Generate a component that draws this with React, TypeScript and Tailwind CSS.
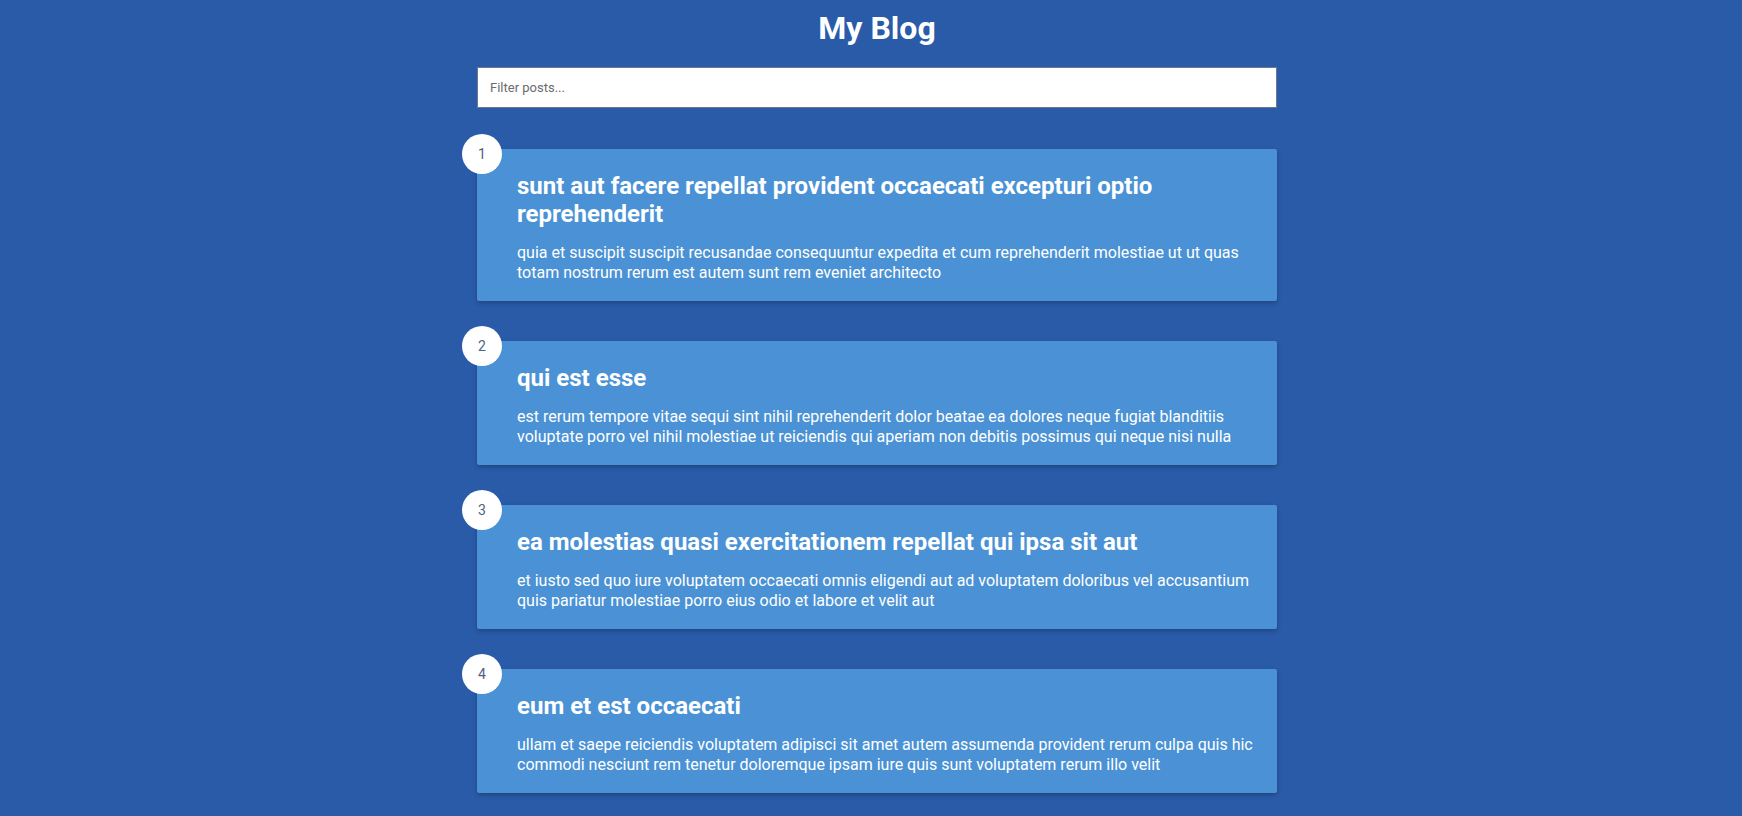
const posts = [
  {
    id: 1,
    title:
      "sunt aut facere repellat provident occaecati excepturi optio reprehenderit",
    body: "quia et suscipit suscipit recusandae consequuntur expedita et cum reprehenderit molestiae ut ut quas totam nostrum rerum est autem sunt rem eveniet architecto",
  },
  {
    id: 2,
    title: "qui est esse",
    body: "est rerum tempore vitae sequi sint nihil reprehenderit dolor beatae ea dolores neque fugiat blanditiis voluptate porro vel nihil molestiae ut reiciendis qui aperiam non debitis possimus qui neque nisi nulla",
  },
  {
    id: 3,
    title: "ea molestias quasi exercitationem repellat qui ipsa sit aut",
    body: "et iusto sed quo iure voluptatem occaecati omnis eligendi aut ad voluptatem doloribus vel accusantium quis pariatur molestiae porro eius odio et labore et velit aut",
  },
  {
    id: 4,
    title: "eum et est occaecati",
    body: "ullam et saepe reiciendis voluptatem adipisci sit amet autem assumenda provident rerum culpa quis hic commodi nesciunt rem tenetur doloremque ipsam iure quis sunt voluptatem rerum illo velit",
  },
];

const Post = ({ post }: { post: (typeof posts)[number] }) => {
  return (
    <div className="relative bg-[#4a92d5] pl-10 pr-5 pt-[23px] pb-[18px] text-white rounded-[2px] shadow-[0_2px_4px_rgba(0,0,0,0.25)]">
      <div className="absolute -left-[15px] -top-[15px] flex h-10 w-10 items-center justify-center rounded-full bg-white text-sm text-[#4f6284]">
        {post.id}
      </div>
      <h2 className="mb-[15px] text-2xl font-bold leading-[28px]">
        {post.title}
      </h2>
      <p className="text-base leading-5">{post.body}</p>
    </div>
  );
};

export default function App() {
  return (
    <div className="min-h-screen bg-[#2a5ba8] pl-[12px] font-['Roboto',sans-serif]">
      <div className="mx-auto w-[800px] pt-[9px]">
        <h1 className="text-center text-[32px] font-bold leading-[38px] text-white">
          My Blog
        </h1>
        <input
          type="text"
          placeholder="Filter posts..."
          className="mt-5 block h-[41px] w-full border border-[#6b7890] bg-white px-3 text-[13px] text-gray-800 placeholder:text-[#6b6b6b] outline-none"
        />
        <div className="mt-[41px] flex flex-col gap-[40px]">
          {posts.map((post) => (
            <Post key={post.id} post={post} />
          ))}
        </div>
      </div>
    </div>
  );
}
